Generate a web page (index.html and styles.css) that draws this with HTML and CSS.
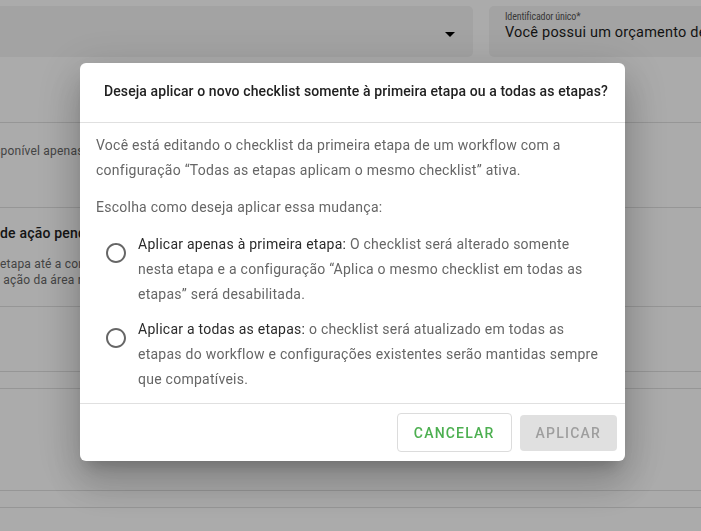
FILE: index.html
```html
<!DOCTYPE html>
<html lang="pt-BR">
<head>
<meta charset="utf-8">
<title>Aplicar checklist</title>
<link rel="stylesheet" href="styles.css">
</head>
<body>
<div class="page">
  <div class="fields">
    <div class="field field-select">
      <svg class="dd-arrow" viewBox="0 0 24 24"><path d="M7 10l5 5 5-5z"/></svg>
    </div>
    <div class="field field-text">
      <span class="field-label">Identificador único*</span>
      <span class="field-value">Você possui um orçamento de acordo com o planejado?</span>
    </div>
  </div>
  <div class="top-spacer"></div>
  <div class="row row-setting">
    <div class="muted shift-setting">Disponível apenas para a primeira etapa</div>
  </div>
  <div class="row row-pending">
    <div class="row-title">de ação pendente</div>
    <div class="muted row-desc">etapa até a conclusão do checklist</div>
    <div class="muted shift-desc">l ação da área responsável</div>
  </div>
  <div class="row row-empty"></div>
  <div class="row row-thin"></div>
  <div class="row row-tall"></div>
  <div class="row row-thin"></div>
  <div class="row row-rest"></div>
</div>

<div class="backdrop">
  <div class="dialog" role="dialog">
    <div class="dialog-header">Deseja aplicar o novo checklist somente à primeira etapa ou a todas as etapas?</div>
    <div class="dialog-body">
      <p>Você está editando o checklist da primeira etapa de um workflow com a configuração “Todas as etapas aplicam o mesmo checklist” ativa.</p>
      <p>Escolha como deseja aplicar essa mudança:</p>
      <div class="options">
        <label class="option">
          <svg class="radio" viewBox="0 0 24 24"><path d="M12 2C6.48 2 2 6.48 2 12s4.48 10 10 10 10-4.48 10-10S17.52 2 12 2zm0 18c-4.42 0-8-3.58-8-8s3.58-8 8-8 8 3.58 8 8-3.58 8-8 8z"/></svg>
          <span class="option-text"><span class="option-label">Aplicar apenas à primeira etapa:</span> O checklist será alterado somente nesta etapa e a configuração “Aplica o mesmo checklist em todas as etapas” será desabilitada.</span>
        </label>
        <label class="option">
          <svg class="radio" viewBox="0 0 24 24"><path d="M12 2C6.48 2 2 6.48 2 12s4.48 10 10 10 10-4.48 10-10S17.52 2 12 2zm0 18c-4.42 0-8-3.58-8-8s3.58-8 8-8 8 3.58 8 8-3.58 8-8 8z"/></svg>
          <span class="option-text"><span class="option-label">Aplicar a todas as etapas:</span> o checklist será atualizado em todas as etapas do workflow e configurações existentes serão mantidas sempre que compatíveis.</span>
        </label>
      </div>
    </div>
    <div class="dialog-footer">
      <button class="btn btn-outline" type="button">Cancelar</button>
      <button class="btn btn-disabled" type="button" disabled>Aplicar</button>
    </div>
  </div>
</div>
</body>
</html>
```

FILE: styles.css
```css
* { box-sizing: border-box; }
html, body { margin: 0; height: 100%; }
body {
  font-family: Roboto, "Noto Sans", sans-serif;
  background: #fff;
  color: #212121;
  overflow: hidden;
}

.page { padding-top: 6px; }

.fields {
  display: grid;
  grid-template-columns: 483px 260px;
  column-gap: 16px;
  margin-left: -10px;
  height: 51px;
}
.field { background: #f3f3f3; border-radius: 5px; }
.field-select {
  display: flex;
  justify-content: flex-end;
  align-items: center;
  padding: 4px 11.5px 0 0;
}
.dd-arrow { width: 24px; height: 24px; fill: #000; }
.field-text { padding: 4px 0 0 16px; white-space: nowrap; overflow: hidden; }
.field-label {
  display: block;
  font-family: "Roboto Condensed", Roboto, sans-serif;
  font-size: 10px;
  letter-spacing: -0.15px;
  line-height: 14px;
  color: #555;
}
.field-value { display: block; font-size: 14.5px; line-height: 18px; color: #1c1c1c; letter-spacing: 0.2px; }

.top-spacer { height: 65px; }

.row { border-top: 1px solid #e0e0e0; white-space: nowrap; }
.row-setting { height: 85px; padding-top: 20px; }
.row-pending { height: 99px; padding-top: 15px; }
.row-empty { height: 65px; }
.row-thin { height: 17px; }
.row-tall { height: 102px; }
.row-rest { height: 40px; }

.muted { font-size: 12px; line-height: 16px; color: #666; letter-spacing: 0.2px; }
.shift-setting { margin-left: -17px; }
.row-title { font-size: 14px; font-weight: 500; line-height: 20px; color: #212121; letter-spacing: 0.2px; }
.row-desc { margin-top: 13px; }
.shift-desc { margin-left: -3px; }

.backdrop {
  position: fixed;
  inset: 0;
  background: rgba(0, 0, 0, 0.33);
  display: flex;
  justify-content: center;
  align-items: flex-start;
  padding: 63px 0 0 4px;
}
.dialog {
  width: 545px;
  background: #fff;
  border-radius: 6px;
  box-shadow: 0 11px 15px -7px rgba(0,0,0,.2), 0 24px 38px 3px rgba(0,0,0,.14), 0 9px 46px 8px rgba(0,0,0,.12);
}
.dialog-header {
  padding: 18px 12px 21px 24px;
  font-size: 14px;
  font-weight: 500;
  line-height: 20px;
  letter-spacing: 0.1px;
  white-space: nowrap;
  color: #212121;
  border-bottom: 1px solid #e0e0e0;
}
.dialog-body {
  padding: 10px 16px 11px;
  font-size: 14px;
  line-height: 25px;
  letter-spacing: 0.25px;
  color: #666;
}
.dialog-body p { margin: 0 0 12px; }
.options { display: flex; flex-direction: column; gap: 10px; }
.option { display: flex; align-items: flex-start; }
.radio {
  flex: none;
  width: 24px;
  height: 24px;
  margin: 9px 10px 0 8px;
  fill: rgba(0, 0, 0, 0.6);
}
.option-text { width: 466px; }
.option-label { color: #2a2a2a; }

.dialog-footer {
  display: flex;
  justify-content: flex-end;
  align-items: center;
  gap: 8px;
  padding: 9px 8px;
  border-top: 1px solid #e0e0e0;
}
.btn {
  font-family: Roboto, sans-serif;
  font-size: 14px;
  font-weight: 500;
  letter-spacing: 1.2px;
  text-transform: uppercase;
  border-radius: 4px;
  padding: 0 16px;
}
.btn-outline {
  height: 39px;
  background: #fff;
  border: 1px solid #dcdcdc;
  color: #4caf50;
}
.btn-disabled {
  height: 36px;
  background: #e0e0e0;
  border: none;
  color: #9e9e9e;
}
```
